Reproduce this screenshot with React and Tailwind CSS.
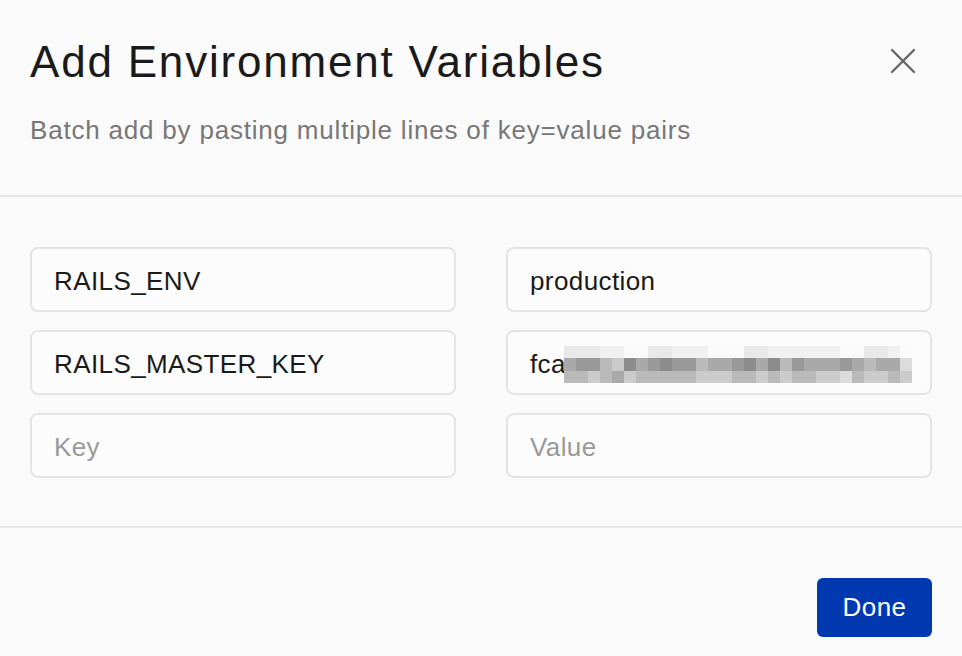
import React, { useState } from 'react';

const palette = [
  'bg-[#fafafa]',
  'bg-[#f1f1f1]',
  'bg-[#e8e8e8]',
  'bg-[#dcdcdc]',
  'bg-[#cbcbcb]',
  'bg-[#bababa]',
  'bg-[#a9a9a9]',
  'bg-[#999999]',
  'bg-[#8c8c8c]',
];

// blurred secret: one digit per 12px cell, index into palette
const mosaic = [
  '22211002211100022111111002210',
  '67754867877566786857666765663',
  '55456455555444554545544354454',
];

const Mosaic = () => (
  <div className="flex flex-col ml-[-2px]">
    {mosaic.map((row, r) => (
      <div key={r} className={r === 1 ? 'flex h-[13px]' : 'flex h-[12px]'}>
        {row.split('').map((c, i) => (
          <div key={i} className={`w-[12px] shrink-0 ${palette[Number(c)]}`} />
        ))}
      </div>
    ))}
  </div>
);

const Field = ({ value, placeholder, children }) => (
  <div className="h-[65px] rounded-[8px] border-2 border-[#e4e4e4] bg-[#fcfcfc] flex items-center pl-[22px] pr-[18px] pt-[3px] overflow-hidden">
    {children ? (
      children
    ) : value ? (
      <span className="text-[26px] tracking-[0.4px] text-[#1a1a1a]">{value}</span>
    ) : (
      <span className="text-[26px] tracking-[0.4px] text-[#9a9a9a]">{placeholder}</span>
    )}
  </div>
);

export default function App() {
  const [open] = useState(true);

  return (
    <div className="w-[962px] h-[656px] bg-[#fafafa] overflow-hidden font-['Liberation_Sans',Arial,sans-serif]">
      {open && (
        <>
          {/* Header */}
          <div className="h-[197px] border-b-2 border-[#e6e6e6] px-[30px] pt-[35px]">
            <div className="flex items-start justify-between">
              <h1 className="text-[44px] leading-[53px] tracking-[1.8px] text-[#1a1a1a]">Add Environment Variables</h1>
              <button type="button" className="mt-[13px] mr-[16px] text-[#666666]">
                <svg width="26" height="26" viewBox="0 0 26 26" fill="none" stroke="currentColor" strokeWidth="2.4" strokeLinecap="round">
                  <path d="M2 2 L24 24 M24 2 L2 24" />
                </svg>
              </button>
            </div>
            <p className="mt-[27px] text-[26px] leading-[30px] tracking-[0.8px] text-[#777777]">
              Batch add by pasting multiple lines of key=value pairs
            </p>
          </div>

          {/* Variables */}
          <div className="border-b-2 border-[#e6e6e6] px-[30px] pt-[50px] pb-[48px]">
            <div className="grid grid-cols-2 gap-x-[50px] gap-y-[18px]">
              <Field value="RAILS_ENV" />
              <Field value="production" />
              <Field value="RAILS_MASTER_KEY" />
              <Field>
                <span className="text-[26px] tracking-[0.4px] text-[#1a1a1a]">fca</span>
                <Mosaic />
              </Field>
              <Field placeholder="Key" />
              <Field placeholder="Value" />
            </div>
          </div>

          {/* Footer */}
          <div className="flex justify-end px-[30px] pt-[50px]">
            <button
              type="button"
              className="h-[59px] w-[115px] rounded-[6px] bg-[#0038b0] text-white text-[26px] tracking-[0.4px]"
            >
              Done
            </button>
          </div>
        </>
      )}
    </div>
  );
}
